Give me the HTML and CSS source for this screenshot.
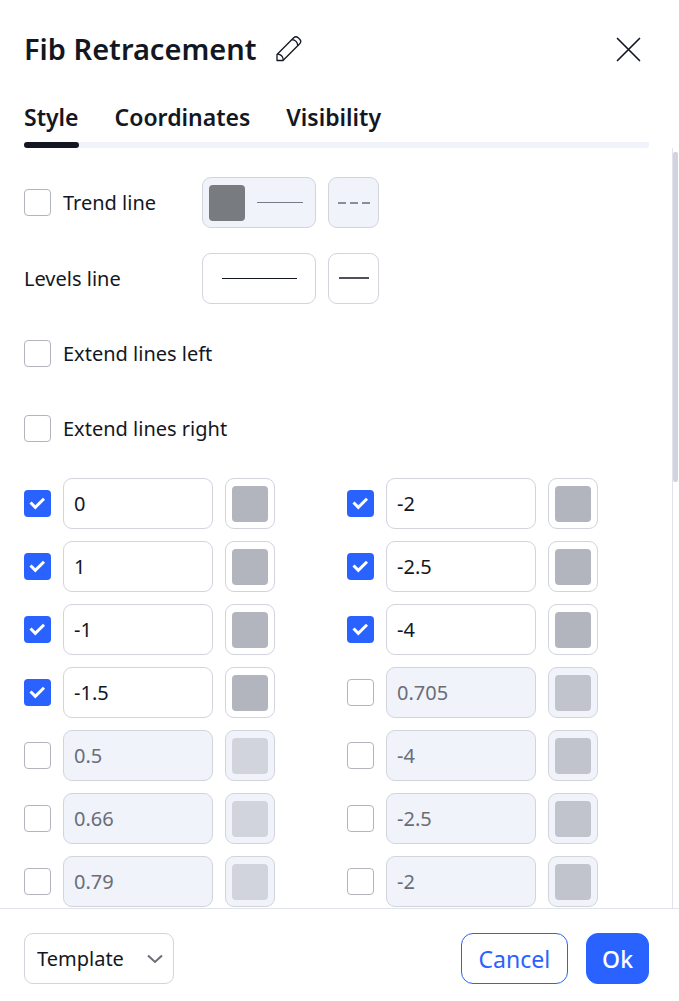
FILE: index.html
```html
<!DOCTYPE html>
<html lang="en">
<head>
    <meta charset="utf-8">
    <meta name="viewport" content="width=device-width, initial-scale=1">
    <title>Fib Retracement</title>
    <link rel="stylesheet" href="styles.css">
</head>
<body>
    <div class="dialog" role="dialog" aria-labelledby="dialogTitle">
        <div class="header">
            <h1 id="dialogTitle">Fib Retracement</h1>
            <button type="button" class="icon-btn" aria-label="Rename">
                <svg width="28" height="28" viewBox="0 0 28 28" fill="none" stroke="#131722" stroke-width="1.3" stroke-linejoin="round">
                    <path d="M2 25.500v-6L18.700 2.800a3.200 3.200 0 0 1 4.500 0l1.500 1.500a3.200 3.200 0 0 1 0 4.500L8 25.500z"/>
                    <path d="M2.500 19.200c3.300.3 5.500 2.500 5.800 5.800M16.800 4.700c3.300.3 5.700 2.700 6 6"/>
                </svg>
            </button>
            <button type="button" class="icon-btn close-btn" aria-label="Close">
                <svg width="26" height="26" viewBox="0 0 26 26" fill="none" stroke="#131722" stroke-width="1.7" stroke-linecap="round">
                    <path d="M2.500 2.500l22 22M24.500 2.500l-22 22"/>
                </svg>
            </button>
        </div>

        <div class="tabs" role="tablist">
            <button type="button" class="tab active" role="tab" aria-selected="true">Style</button>
            <button type="button" class="tab" role="tab" aria-selected="false">Coordinates</button>
            <button type="button" class="tab" role="tab" aria-selected="false">Visibility</button>
        </div>

        <div class="body">
            <div class="content">
                <!-- Line settings -->
                <div class="line-row">
                    <div class="line-label">
                        <input type="checkbox" id="trendLine">
                        <label for="trendLine">Trend line</label>
                    </div>
                    <button type="button" class="box line-color" aria-label="Trend line color" disabled>
                        <span class="swatch dark"></span>
                        <span class="line-sample"></span>
                    </button>
                    <button type="button" class="box line-style" aria-label="Trend line style" disabled>
                        <svg width="32" height="2" viewBox="0 0 32 2"><path d="M0 1h8M12 1h8M24 1h8" stroke="#6a6d78" stroke-width="1.500"/></svg>
                    </button>
                </div>
                <div class="line-row">
                    <div class="line-label">Levels line</div>
                    <button type="button" class="box line-color" aria-label="Levels line width">
                        <span class="line-sample"></span>
                    </button>
                    <button type="button" class="box line-style" aria-label="Levels line style">
                        <svg width="30" height="4" viewBox="0 0 30 4"><path d="M0 1h30" stroke="#131722" stroke-width="1.500"/></svg>
                    </button>
                </div>

                <div class="extend-group">
                    <div class="check-row">
                        <input type="checkbox" id="extendLeft">
                        <label for="extendLeft">Extend lines left</label>
                    </div>
                    <div class="check-row">
                        <input type="checkbox" id="extendRight">
                        <label for="extendRight">Extend lines right</label>
                    </div>
                </div>

                <!-- Levels -->
                <div class="levels">
                    <div class="level">
                        <input type="checkbox" aria-label="Show level 1" checked>
                        <input type="text" class="box" aria-label="Level 1" value="0">
                        <button type="button" class="box color-btn" aria-label="Level 1 color"><span class="swatch"></span></button>
                    </div>
                    <div class="level">
                        <input type="checkbox" aria-label="Show level 2" checked>
                        <input type="text" class="box" aria-label="Level 2" value="-2">
                        <button type="button" class="box color-btn" aria-label="Level 2 color"><span class="swatch"></span></button>
                    </div>
                    <div class="level">
                        <input type="checkbox" aria-label="Show level 3" checked>
                        <input type="text" class="box" aria-label="Level 3" value="1">
                        <button type="button" class="box color-btn" aria-label="Level 3 color"><span class="swatch"></span></button>
                    </div>
                    <div class="level">
                        <input type="checkbox" aria-label="Show level 4" checked>
                        <input type="text" class="box" aria-label="Level 4" value="-2.5">
                        <button type="button" class="box color-btn" aria-label="Level 4 color"><span class="swatch"></span></button>
                    </div>
                    <div class="level">
                        <input type="checkbox" aria-label="Show level 5" checked>
                        <input type="text" class="box" aria-label="Level 5" value="-1">
                        <button type="button" class="box color-btn" aria-label="Level 5 color"><span class="swatch"></span></button>
                    </div>
                    <div class="level">
                        <input type="checkbox" aria-label="Show level 6" checked>
                        <input type="text" class="box" aria-label="Level 6" value="-4">
                        <button type="button" class="box color-btn" aria-label="Level 6 color"><span class="swatch"></span></button>
                    </div>
                    <div class="level">
                        <input type="checkbox" aria-label="Show level 7" checked>
                        <input type="text" class="box" aria-label="Level 7" value="-1.5">
                        <button type="button" class="box color-btn" aria-label="Level 7 color"><span class="swatch"></span></button>
                    </div>
                    <div class="level">
                        <input type="checkbox" aria-label="Show level 8">
                        <input type="text" class="box" aria-label="Level 8" value="0.705" disabled>
                        <button type="button" class="box color-btn" aria-label="Level 8 color" disabled><span class="swatch muted"></span></button>
                    </div>
                    <div class="level">
                        <input type="checkbox" aria-label="Show level 9">
                        <input type="text" class="box" aria-label="Level 9" value="0.5" disabled>
                        <button type="button" class="box color-btn" aria-label="Level 9 color" disabled><span class="swatch light"></span></button>
                    </div>
                    <div class="level">
                        <input type="checkbox" aria-label="Show level 10">
                        <input type="text" class="box" aria-label="Level 10" value="-4" disabled>
                        <button type="button" class="box color-btn" aria-label="Level 10 color" disabled><span class="swatch muted"></span></button>
                    </div>
                    <div class="level">
                        <input type="checkbox" aria-label="Show level 11">
                        <input type="text" class="box" aria-label="Level 11" value="0.66" disabled>
                        <button type="button" class="box color-btn" aria-label="Level 11 color" disabled><span class="swatch light"></span></button>
                    </div>
                    <div class="level">
                        <input type="checkbox" aria-label="Show level 12">
                        <input type="text" class="box" aria-label="Level 12" value="-2.5" disabled>
                        <button type="button" class="box color-btn" aria-label="Level 12 color" disabled><span class="swatch muted"></span></button>
                    </div>
                    <div class="level">
                        <input type="checkbox" aria-label="Show level 13">
                        <input type="text" class="box" aria-label="Level 13" value="0.79" disabled>
                        <button type="button" class="box color-btn" aria-label="Level 13 color" disabled><span class="swatch light"></span></button>
                    </div>
                    <div class="level">
                        <input type="checkbox" aria-label="Show level 14">
                        <input type="text" class="box" aria-label="Level 14" value="-2" disabled>
                        <button type="button" class="box color-btn" aria-label="Level 14 color" disabled><span class="swatch muted"></span></button>
                    </div>
                </div>
            </div>
            <div class="scrollbar"><div class="thumb"></div></div>
        </div>

        <div class="footer">
            <select class="box template" aria-label="Template">
                <option>Template</option>
            </select>
            <button type="button" class="btn cancel-btn">Cancel</button>
            <button type="button" class="btn ok-btn">Ok</button>
        </div>
    </div>
</body>
</html>
```
FILE: styles.css
```css
* {
    box-sizing: border-box;
}
body {
    margin: 0;
    background: #fff;
    color: #131722;
    font-family: "Trebuchet MS", "Noto Sans", sans-serif;
    font-size: 20px;
    line-height: 26px;
}
button, input, select {
    margin: 0;
    font: inherit;
    color: inherit;
}
button {
    cursor: pointer;
}
.dialog {
    display: flex;
    flex-direction: column;
    height: 100vh;
}

.header {
    display: flex;
    align-items: center;
    padding: 29px 38px 0 24px;
}
h1 {
    margin: 0;
    font-size: 29px;
    font-weight: 600;
    line-height: 40px;
}
.icon-btn {
    display: flex;
    padding: 0;
    border: none;
    background: none;
}
h1 + .icon-btn {
    margin-left: 19px;
}
.header .close-btn {
    margin-left: auto;
}

.tabs {
    display: flex;
    gap: 36px;
    margin: 34px 30px 0 24px;
    border-radius: 3px;
    background: linear-gradient(#f0f3fa, #f0f3fa) bottom / 100% 6px no-repeat;
}
.tab {
    padding: 0 0 10px;
    border: none;
    background: none;
    font-size: 23px;
    font-weight: 600;
    line-height: 29px;
}
.tab::after {
    content: "";
    display: block;
    height: 6px;
    margin: 10px 0 -10px;
    border-radius: 3px;
}
.tab.active::after {
    background: #131722;
}

.body {
    display: flex;
    flex: 1;
    min-height: 0;
}
.content {
    flex: 1;
    overflow: hidden;
    padding: 29px 23px 0 24px;
}
.scrollbar {
    width: 7px;
    padding-top: 4px;
    border-left: 1px solid #e0e3eb;
}
.thumb {
    width: 5px;
    height: 330px;
    border-radius: 2px;
    background: #d1d4dc;
}

.box {
    height: 51px;
    border: 1px solid #d1d4dc;
    border-radius: 9px;
    background: #fff;
}
.box:disabled {
    background: #f0f3fa;
    color: #6a6d78;
    cursor: default;
}
.swatch {
    width: 36px;
    height: 36px;
    border-radius: 4px;
    background: #b2b5be;
}
.swatch.dark {
    background: #787b80;
}
.swatch.muted {
    background: #c1c4cd;
}
.swatch.light {
    background: #d1d4dc;
}

input[type="checkbox"] {
    flex: none;
    width: 27px;
    height: 27px;
    border: 1px solid #b2b5be;
    border-radius: 4px;
    background: #fff;
    appearance: none;
}
input[type="checkbox"]:checked {
    border: none;
    background: #2962ff url("data:image/svg+xml,%3Csvg xmlns='http://www.w3.org/2000/svg' viewBox='0 0 27 27' fill='none' stroke='white' stroke-width='3'%3E%3Cpath d='M6.500 12.500l4.800 4.800 8.700-8.600'/%3E%3C/svg%3E");
}

.line-row {
    display: flex;
    align-items: center;
    gap: 12px;
    margin-bottom: 25px;
}
.line-label {
    display: flex;
    align-items: center;
    gap: 12px;
    width: 166px;
}
.line-color, .line-style {
    display: flex;
    align-items: center;
    justify-content: center;
    padding: 0 6px;
}
.line-color {
    width: 114px;
}
.line-style {
    width: 51px;
}
.line-sample {
    width: 75px;
    height: 1px;
    background: #131722;
}
.swatch + .line-sample {
    flex: 1;
    margin: 0 6px 0 12px;
    background: #787b86;
}

.extend-group {
    display: flex;
    flex-direction: column;
    gap: 48px;
    margin: 36px 0;
}
.check-row {
    display: flex;
    align-items: center;
    gap: 12px;
    height: 27px;
}

.levels {
    display: grid;
    grid-template-columns: 1fr 1fr;
    gap: 12px 21px;
}
.level {
    display: flex;
    align-items: center;
    gap: 12px;
}
.level input[type="text"] {
    width: 150px;
    padding: 0 10px;
}
.color-btn {
    display: flex;
    align-items: center;
    justify-content: center;
    width: 50px;
    padding: 0;
}

.footer {
    display: flex;
    gap: 18px;
    padding: 24px 30px 17px 24px;
    border-top: 1px solid #e0e3eb;
}
.template {
    width: 150px;
    margin-right: auto;
    padding: 0 12px;
    appearance: none;
    background: url("data:image/svg+xml,%3Csvg xmlns='http://www.w3.org/2000/svg' width='16' height='10' fill='none' stroke='%236a6d78' stroke-width='2'%3E%3Cpath d='M1 1.500l7 6.500 7-6.500'/%3E%3C/svg%3E") right 10px center no-repeat;
}
.btn {
    height: 51px;
    border: 1px solid #2962ff;
    border-radius: 12px;
    font-size: 23px;
}
.cancel-btn {
    padding: 0 17px;
    background: #fff;
    color: #2962ff;
}
.ok-btn {
    padding: 0 15px;
    background: #2962ff;
    color: #fff;
    font-weight: 500;
}
```
